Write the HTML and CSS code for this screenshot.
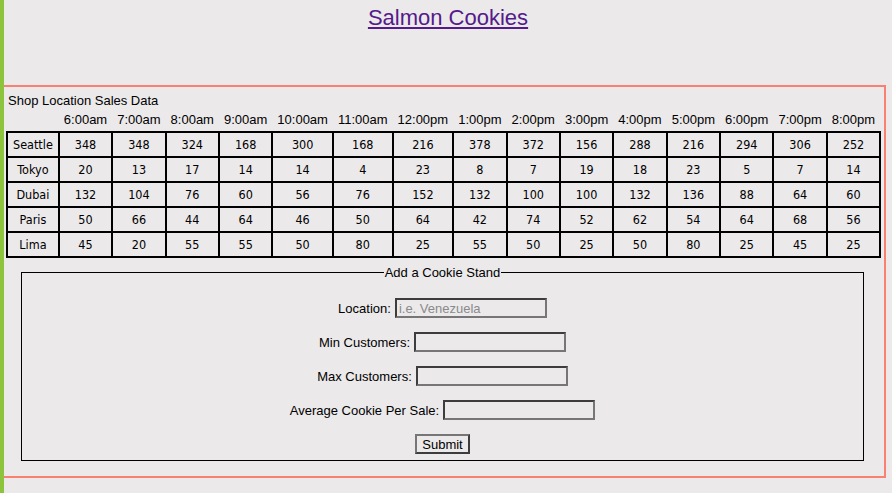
FILE: index.html
```html
<!DOCTYPE html>
<html>
<head>
	<title>Salmon Cookies</title>
	<link rel="stylesheet" href="styles.css">
</head>
<body>

	<h1 class="site-title"><a href="#">Salmon Cookies</a></h1>

	<section class="sales">
		<table id="sales-table">
			<caption>Shop Location Sales Data</caption>
			<thead>
				<tr>
					<th></th>
					<th>6:00am</th><th>7:00am</th><th>8:00am</th><th>9:00am</th><th>10:00am</th>
					<th>11:00am</th><th>12:00pm</th><th>1:00pm</th><th>2:00pm</th><th>3:00pm</th>
					<th>4:00pm</th><th>5:00pm</th><th>6:00pm</th><th>7:00pm</th><th>8:00pm</th>
				</tr>
			</thead>
			<tbody>
				<tr>
					<td>Seattle</td>
					<td>348</td><td>348</td><td>324</td><td>168</td><td>300</td><td>168</td><td>216</td><td>378</td>
					<td>372</td><td>156</td><td>288</td><td>216</td><td>294</td><td>306</td><td>252</td>
				</tr>
				<tr>
					<td>Tokyo</td>
					<td>20</td><td>13</td><td>17</td><td>14</td><td>14</td><td>4</td><td>23</td><td>8</td>
					<td>7</td><td>19</td><td>18</td><td>23</td><td>5</td><td>7</td><td>14</td>
				</tr>
				<tr>
					<td>Dubai</td>
					<td>132</td><td>104</td><td>76</td><td>60</td><td>56</td><td>76</td><td>152</td><td>132</td>
					<td>100</td><td>100</td><td>132</td><td>136</td><td>88</td><td>64</td><td>60</td>
				</tr>
				<tr>
					<td>Paris</td>
					<td>50</td><td>66</td><td>44</td><td>64</td><td>46</td><td>50</td><td>64</td><td>42</td>
					<td>74</td><td>52</td><td>62</td><td>54</td><td>64</td><td>68</td><td>56</td>
				</tr>
				<tr>
					<td>Lima</td>
					<td>45</td><td>20</td><td>55</td><td>55</td><td>50</td><td>80</td><td>25</td><td>55</td>
					<td>50</td><td>25</td><td>50</td><td>80</td><td>25</td><td>45</td><td>25</td>
				</tr>
			</tbody>
		</table>

		<form id="store-form">
			<fieldset>
				<legend>Add a Cookie Stand</legend>
				<div class="field">
					<label for="location">Location:</label>
					<input type="text" id="location" name="location" placeholder="i.e. Venezuela">
				</div>
				<div class="field">
					<label for="min">Min Customers:</label>
					<input type="text" id="min" name="min">
				</div>
				<div class="field">
					<label for="max">Max Customers:</label>
					<input type="text" id="max" name="max">
				</div>
				<div class="field">
					<label for="avg">Average Cookie Per Sale:</label>
					<input type="text" id="avg" name="avg">
				</div>
				<div class="field">
					<button type="submit">Submit</button>
				</div>
			</fieldset>
		</form>
	</section>

</body>
</html>
```

FILE: styles.css
```css
*{
	box-sizing: border-box;
}
body{
	margin: 0;
	min-height: 100vh;
	border-left: 4px solid #8cc43e;
	background-color: #ebe9ea;
	font-family: "Liberation Sans", Arial, sans-serif;
	font-size: 13px;
	color: #000;
}

.site-title{
	margin: 0;
	padding-top: 5px;
	font-size: 22px;
	font-weight: normal;
	line-height: 25px;
	text-align: center;
}
.site-title a{
	color: #551a8b;
}

.sales{
	margin: 55px 6px 0 0;
	padding: 6px 0 15px 2px;
	border: 2px solid #fa8072;
	border-left: none;
}

#sales-table{
	border-collapse: collapse;
}
#sales-table caption{
	text-align: left;
	padding-left: 2px;
	line-height: 16px;
}
#sales-table th{
	font-weight: normal;
	padding: 3px 5px;
	line-height: 16px;
}
#sales-table td{
	border: 2px solid #000;
	padding: 3px 5px;
	line-height: 17px;
	text-align: center;
	font-family: "DejaVu Sans Condensed", "DejaVu Sans", sans-serif;
	font-stretch: condensed;
	font-size: 12.5px;
}

fieldset{
	margin: 7px 20px 0 15px;
	padding: 4px 12px 6px;
	border: 1px solid #000;
}
legend{
	margin: 0 auto;
	padding: 0 1px;
}
.field{
	display: flex;
	justify-content: center;
	align-items: center;
	gap: 4px;
	height: 20px;
	margin-top: 14px;
}
.field input{
	width: 152px;
	height: 20px;
	padding: 0 2px;
	border: 2px solid;
	border-color: #3d3d3d #767676 #767676 #3d3d3d;
	background: transparent;
	font-family: "Liberation Sans", Arial, sans-serif;
	font-size: 13px;
}
.field input::placeholder{
	color: #8a8a8a;
}
.field button{
	height: 20px;
	padding: 0 5px;
	border: 2px solid;
	border-color: #767676 #3d3d3d #3d3d3d #767676;
	background: transparent;
	font-family: "Liberation Sans", Arial, sans-serif;
	font-size: 13px;
	color: #000;
}
```
